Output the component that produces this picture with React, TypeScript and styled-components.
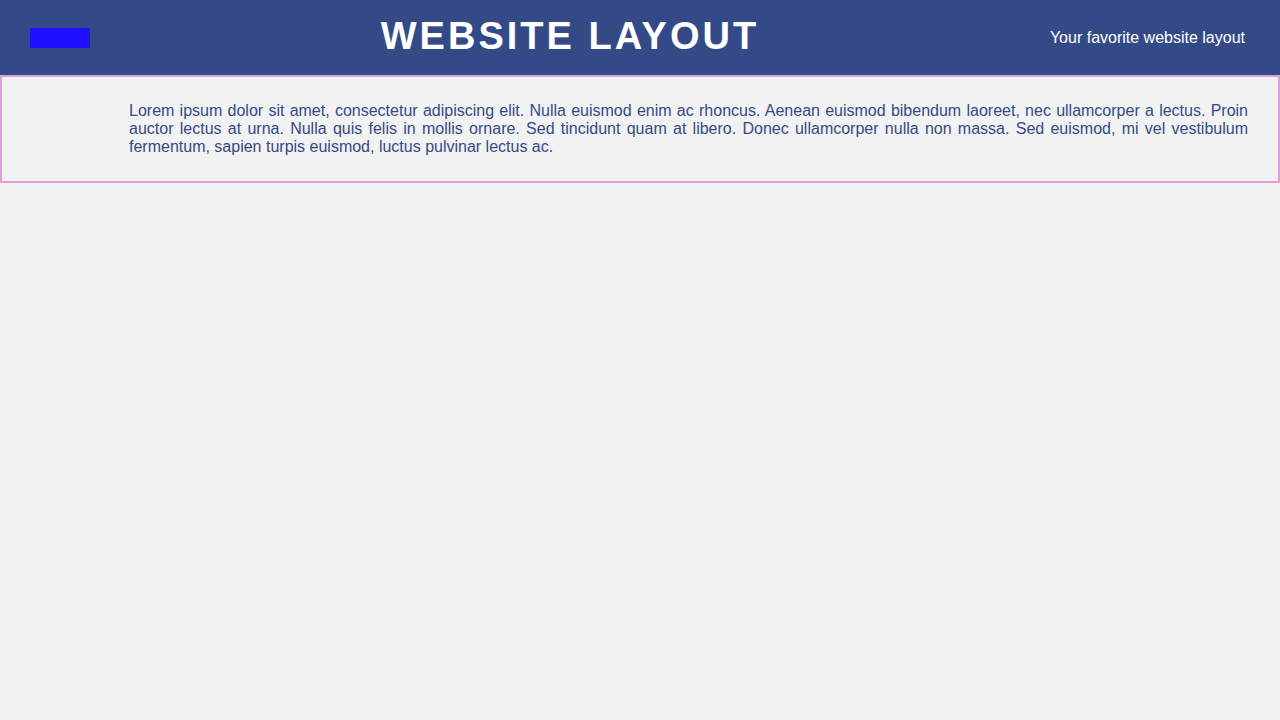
import styled, { createGlobalStyle } from 'styled-components';

const Global = createGlobalStyle`
  html, body {
    margin: 0;
    padding: 0;
    background: #f2f2f2;
    font-family: "Liberation Sans", Arial, sans-serif;
  }
`;

function App() {
  return (
    <>
      <Global />
      <Header>
        <Logo />
        <Title>Website Layout</Title>
        <Tagline>Your favorite website layout</Tagline>
      </Header>
      <Main>
        <Aside />
        <Text>
          Lorem ipsum dolor sit amet, consectetur adipiscing elit. Nulla euismod enim ac
          rhoncus. Aenean euismod bibendum laoreet, nec ullamcorper a lectus. Proin auctor
          lectus at urna. Nulla quis felis in mollis ornare. Sed tincidunt quam at libero.
          Donec ullamcorper nulla non massa. Sed euismod, mi vel vestibulum fermentum,
          sapien turpis euismod, luctus pulvinar lectus ac.
        </Text>
      </Main>
    </>
  );
}

export default App;

const Header = styled.header`
  height: 75px;
  background: #344a87;
  display: flex;
  align-items: center;
  justify-content: space-between;
  padding: 0 35px 0 30px;
  box-sizing: border-box;
`;

const Logo = styled.div`
  width: 60px;
  height: 20px;
  background: #1f10ff;
`;

const Title = styled.h1`
  margin: 0 0 2px 0;
  color: #fff;
  font-size: 38px;
  font-weight: bold;
  letter-spacing: 3px;
  text-transform: uppercase;
`;

const Tagline = styled.span`
  color: #fff;
  font-size: 16px;
`;

const Main = styled.main`
  display: flex;
  border: 2px solid #dda0dd;
  padding: 25px 30px 25px 0;
`;

const Aside = styled.aside`
  width: 127px;
  flex-shrink: 0;
`;

const Text = styled.p`
  margin: 0;
  color: #344a87;
  font-size: 16px;
  line-height: 18px;
  text-align: justify;
`;
